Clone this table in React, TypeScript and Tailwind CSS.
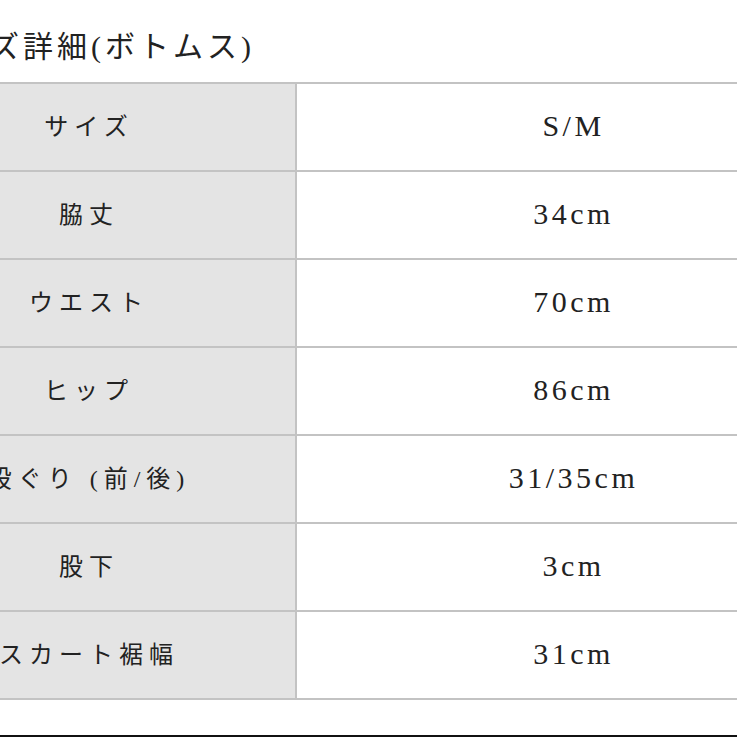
const rows = [
  { label: "サイズ", value: "S/M" },
  { label: "脇丈", value: "34cm" },
  { label: "ウエスト", value: "70cm" },
  { label: "ヒップ", value: "86cm" },
  { label: "股ぐり (前/後)", value: "31/35cm" },
  { label: "股下", value: "3cm" },
  { label: "スカート裾幅", value: "31cm" },
];

const jp = { fontFamily: '"Liberation Serif", "Noto Sans CJK JP", serif' };

export default function App() {
  return (
    <div className="w-[737px] h-[737px] overflow-hidden bg-white flex flex-col text-[#222]" style={jp}>
      {/* title, its start is cut off by the frame */}
      <div className="h-[82px] flex items-center pt-[10px]">
        <h2 className="ml-[-78px] text-[30px] tracking-[4px] font-normal whitespace-nowrap">
          サイズ詳細(ボトムス)
        </h2>
      </div>

      <div className="ml-[-117px] w-[967px] border-t-2 border-[#c3c3c3]">
        {rows.map((r) => (
          <div key={r.label} className="grid grid-cols-[414px_553px] border-b-2 border-[#c3c3c3]">
            <div className="h-[86px] bg-[#e4e4e4] border-r-2 border-[#c3c3c3] flex items-center justify-center text-[24px] tracking-[6px] whitespace-nowrap">
              {r.label}
            </div>
            <div className="h-[86px] flex items-center justify-center pb-[3px] text-[30px] tracking-[3.5px]">
              {r.value}
            </div>
          </div>
        ))}
      </div>

      <div className="flex-1" />
      <div className="h-[2px] bg-[#111]" />
    </div>
  );
}
